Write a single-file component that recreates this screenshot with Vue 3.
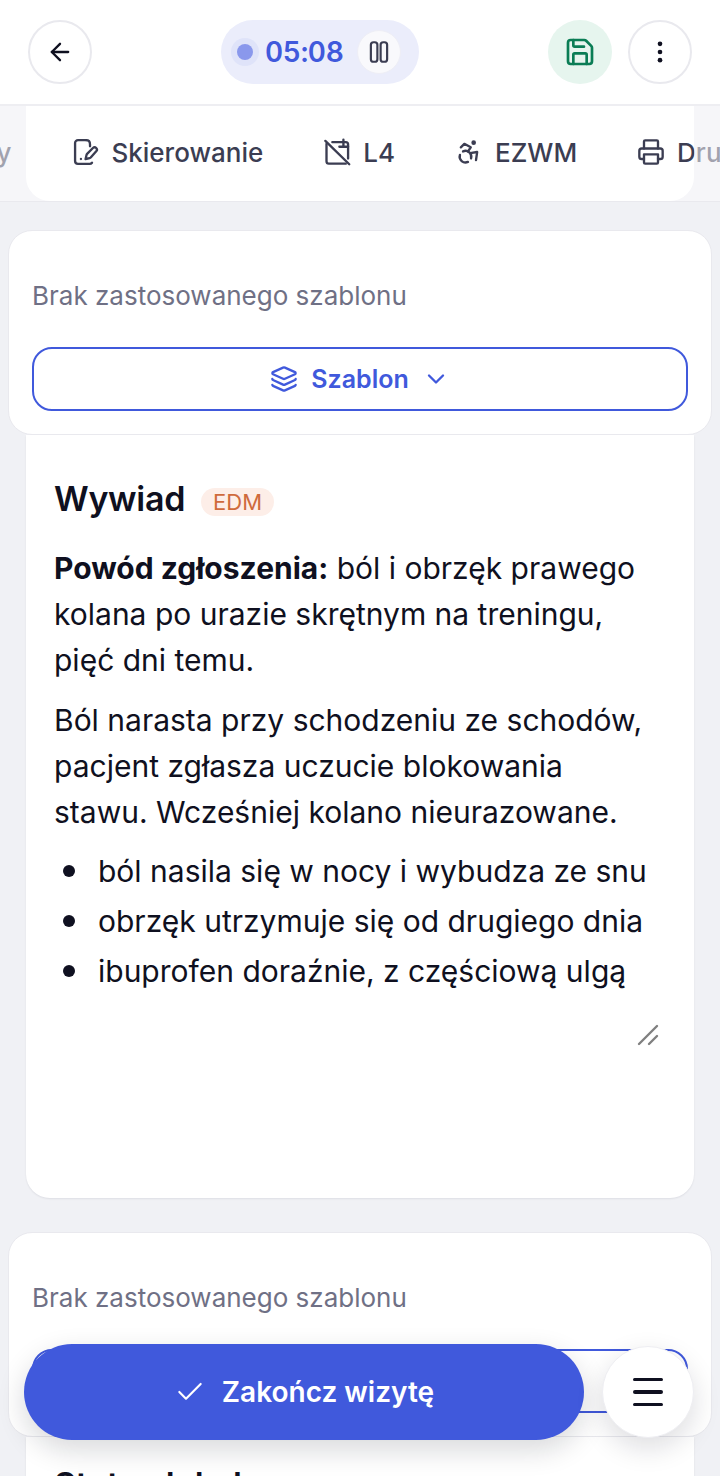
<template>
  <div class="screen">
    <header class="topbar">
      <button class="round">
        <svg width="28" height="28" viewBox="0 0 24 24" fill="none" stroke="#0f1020" stroke-width="2" stroke-linecap="round" stroke-linejoin="round">
          <path d="M19 12H5" /><path d="M12 19l-7-7 7-7" />
        </svg>
      </button>
      <div class="timer">
        <span class="dot"></span>
        <span class="time">05:08</span>
        <span class="pause">
          <svg width="26" height="26" viewBox="0 0 24 24" fill="none" stroke="#3b3d52" stroke-width="2" stroke-linejoin="round">
            <rect x="4.5" y="3" width="6" height="18" rx="2.4" /><rect x="13.5" y="3" width="6" height="18" rx="2.4" />
          </svg>
        </span>
      </div>
      <div class="top-right">
        <button class="round save">
          <svg width="32" height="32" viewBox="0 0 24 24" fill="none" stroke="#0a7d55" stroke-width="2" stroke-linecap="round" stroke-linejoin="round">
            <path d="M15.2 3a2 2 0 0 1 1.4.6l3.8 3.8a2 2 0 0 1 .6 1.4V19a2 2 0 0 1-2 2H5a2 2 0 0 1-2-2V5a2 2 0 0 1 2-2z" />
            <path d="M17 21v-7a1 1 0 0 0-1-1H8a1 1 0 0 0-1 1v7" /><path d="M7 3v4a1 1 0 0 0 1 1h7" />
          </svg>
        </button>
        <button class="round">
          <svg width="28" height="28" viewBox="0 0 24 24" fill="#0f1020">
            <circle cx="12" cy="5" r="2" /><circle cx="12" cy="12" r="2" /><circle cx="12" cy="19" r="2" />
          </svg>
        </button>
      </div>
    </header>

    <div class="tabs">
      <div class="tab-row">
        <div class="tab" v-for="tab in tabs" :key="tab.label">
          <svg width="28" height="28" viewBox="0 0 24 24" fill="none" stroke="#3b3d52" stroke-width="2" stroke-linecap="round" stroke-linejoin="round">
            <path v-for="(d, i) in tab.paths" :key="i" :d="d" />
            <circle v-if="tab.head" cx="16" cy="4" r="1" />
          </svg>
          <span>{{ tab.label }}</span>
        </div>
      </div>
      <div class="fade fade-left"></div>
      <div class="fade fade-right"></div>
    </div>

    <main class="content">
      <template v-for="(section, i) in sections" :key="i">
        <div class="template-card">
          <p class="no-template">Brak zastosowanego szablonu</p>
          <button class="template-btn">
            <svg width="28" height="28" viewBox="0 0 24 24" fill="none" stroke="#4059dc" stroke-width="2" stroke-linecap="round" stroke-linejoin="round">
              <path d="M12.8 2.2a2 2 0 0 0-1.6 0L2.6 6.1a1 1 0 0 0 0 1.8l8.6 3.9a2 2 0 0 0 1.6 0l8.6-3.9a1 1 0 0 0 0-1.8z" />
              <path d="M2 12a1 1 0 0 0 .6.9l8.6 3.9a2 2 0 0 0 1.6 0l8.6-3.9A1 1 0 0 0 22 12" />
              <path d="M2 17a1 1 0 0 0 .6.9l8.6 3.9a2 2 0 0 0 1.6 0l8.6-3.9A1 1 0 0 0 22 17" />
            </svg>
            <span>Szablon</span>
            <svg class="chev" width="28" height="28" viewBox="0 0 24 24" fill="none" stroke="#4059dc" stroke-width="2" stroke-linecap="round" stroke-linejoin="round">
              <path d="M6 9l6 6 6-6" />
            </svg>
          </button>
        </div>
        <section class="editor" :class="{ last: i === sections.length - 1 }">
          <div class="editor-head">
            <h2>{{ section.title }}</h2>
            <span v-if="section.edm" class="edm">EDM</span>
          </div>
          <template v-if="section.edm">
            <p><b>Powód zgłoszenia:</b> ból i obrzęk prawego kolana po urazie skrętnym na treningu, pięć dni temu.</p>
            <p>Ból narasta przy schodzeniu ze schodów, pacjent zgłasza uczucie blokowania stawu. Wcześniej kolano nieurazowane.</p>
            <ul>
              <li>ból nasila się w nocy i wybudza ze snu</li>
              <li>obrzęk utrzymuje się od drugiego dnia</li>
              <li>ibuprofen doraźnie, z częściową ulgą</li>
            </ul>
            <svg class="resize" width="24" height="24" viewBox="0 0 24 24" stroke="#808080" stroke-width="2.4" stroke-linecap="round">
              <path d="M3 21L21 3" /><path d="M13 21l8-8" />
            </svg>
          </template>
        </section>
      </template>
    </main>

    <div class="bottom-bar">
      <button class="finish">
        <svg width="32" height="32" viewBox="0 0 24 24" fill="none" stroke="#fff" stroke-width="1.6" stroke-linecap="round" stroke-linejoin="round">
          <path d="M20 6L9 17l-5-5" />
        </svg>
        <span>Zakończ wizytę</span>
      </button>
      <button class="menu">
        <span></span><span></span><span></span>
      </button>
    </div>
  </div>
</template>

<script setup>
const tabs = [
  { label: 'Recepty', paths: ['M6 3h12v18H6z', 'M9 8h6', 'M9 12h6'] },
  {
    label: 'Skierowanie',
    paths: [
      'M13 1.8H6a2.5 2.5 0 0 0-2.5 2.5v15.4A2.5 2.5 0 0 0 6 22.2h10a2.5 2.5 0 0 0 2-1',
      'M13 1.8c2 0 3.3 1.6 3.3 3.7V7',
      'M8.5 18h.01',
      'M21.6 11.4a1.9 1.9 0 0 0-2.8-2.8l-5 5a2 2 0 0 0-.5.9l-.8 3.5 3.5-.8a2 2 0 0 0 .9-.5z'
    ]
  },
  {
    label: 'L4',
    paths: [
      'M2 2.5l20.5 20',
      'M3 5v15a2 2 0 0 0 2 2h14.5',
      'M8 3.5h11.5a2 2 0 0 1 2 2v12',
      'M17.5 1.5v6',
      'M14 7.5h7.5'
    ]
  },
  {
    label: 'EZWM',
    head: true,
    paths: [
      'M18 19l1-7-6 1',
      'M5 8l3-3 5.5 3-2.36 3.5',
      'M4.24 14.5a5 5 0 0 0 6.88 6',
      'M13.76 17.5a5 5 0 0 0-6.88-6'
    ]
  },
  {
    label: 'Druki',
    paths: [
      'M6 18H4a2 2 0 0 1-2-2v-5a2 2 0 0 1 2-2h16a2 2 0 0 1 2 2v5a2 2 0 0 1-2 2h-2',
      'M6 9V3a1 1 0 0 1 1-1h10a1 1 0 0 1 1 1v6',
      'M6 14h12v7a1 1 0 0 1-1 1H7a1 1 0 0 1-1-1z'
    ]
  }
]

const sections = [
  { title: 'Wywiad', edm: true },
  { title: 'Status lokalny', edm: false }
]
</script>

<style>
html, body {
  margin: 0;
  background: #f0f1f5;
}
</style>

<style scoped>
.screen {
  position: relative;
  width: 720px;
  height: 1476px;
  overflow: hidden;
  background: #f0f1f5;
  font-family: Inter, "Noto Sans", sans-serif;
  color: #0f1020;
}

button {
  font-family: inherit;
  padding: 0;
  cursor: pointer;
}

.topbar {
  height: 104px;
  box-sizing: border-box;
  padding: 20px 28px;
  background: #fff;
  display: flex;
  justify-content: space-between;
  align-items: center;
}

.round {
  width: 64px;
  height: 64px;
  border-radius: 50%;
  background: #fff;
  border: 2px solid #e9e9ee;
  display: flex;
  align-items: center;
  justify-content: center;
}

.round.save {
  background: #e6f5ee;
  border: none;
}

.top-right {
  display: flex;
  gap: 16px;
}

.timer {
  height: 64px;
  width: 198px;
  box-sizing: border-box;
  border-radius: 32px;
  background: #ebedfb;
  padding: 0 18px 0 16px;
  display: flex;
  align-items: center;
}

.dot {
  flex-shrink: 0;
  width: 16px;
  height: 16px;
  border-radius: 50%;
  background: #8a98ec;
  box-shadow: 0 0 0 6px #dfe3f9;
}

.time {
  margin-left: 12px;
  font-size: 28px;
  font-weight: 600;
  letter-spacing: -0.3px;
  color: #4059dc;
  font-variant-numeric: tabular-nums;
}

.pause {
  margin-left: auto;
  width: 44px;
  height: 44px;
  box-sizing: border-box;
  border-radius: 50%;
  background: #f9f9fc;
  border: 1px solid #eeeef6;
  display: flex;
  align-items: center;
  justify-content: center;
}

.tabs {
  position: relative;
  height: 98px;
  box-sizing: border-box;
  overflow: hidden;
  border-top: 2px solid #eeeef2;
  border-bottom: 1px solid #e9e9ee;
  background: #f6f6f9;
}

.tabs::before {
  content: "";
  position: absolute;
  inset: 0 26px;
  background: #fff;
  border-radius: 0 0 24px 24px;
}

.tab-row {
  position: relative;
  display: flex;
  gap: 60px;
  align-items: center;
  height: 92px;
  margin-left: -131px;
}

.tab {
  display: flex;
  align-items: center;
  gap: 12px;
  font-size: 26px;
  font-weight: 500;
  color: #3b3d52;
  white-space: nowrap;
  flex-shrink: 0;
}

.fade {
  position: absolute;
  top: 0;
  bottom: 0;
  width: 26px;
  background: rgba(246, 246, 249, 0.55);
}

.fade-left {
  left: 0;
}

.fade-right {
  right: 0;
}

.content {
  padding: 28px 8px 0;
}

.template-card {
  position: relative;
  z-index: 1;
  height: 205px;
  box-sizing: border-box;
  background: #fff;
  border-radius: 24px;
  border: 1px solid #e9e9ee;
  padding: 49px 23px 0;
}

.no-template {
  margin: 0;
  font-size: 26px;
  line-height: 32px;
  color: #6f7085;
}

.template-btn {
  margin-top: 35px;
  width: 100%;
  height: 64px;
  border: 2px solid #4059dc;
  border-radius: 20px;
  background: #fff;
  color: #4059dc;
  font-size: 25px;
  font-weight: 600;
  display: flex;
  align-items: center;
  justify-content: center;
  gap: 13px;
}

.editor {
  position: relative;
  margin: 0 18px 34px;
  height: 763px;
  box-sizing: border-box;
  background: #fff;
  border-radius: 0 0 24px 24px;
  box-shadow: 0 1px 2px rgba(15, 16, 32, 0.08);
  padding: 46px 40px 0 28px;
  font-size: 30px;
  line-height: 46px;
}

.editor.last {
  margin-bottom: 0;
  border-radius: 0;
  padding-top: 30px;
}

.editor-head {
  display: flex;
  align-items: center;
  gap: 16px;
  margin-bottom: 28px;
  height: 36px;
}

.editor-head h2 {
  margin: 0;
  font-size: 34px;
  font-weight: 600;
  letter-spacing: -0.3px;
  white-space: nowrap;
}

.edm {
  margin-top: 6px;
  padding: 0 12px;
  height: 28px;
  line-height: 28px;
  border-radius: 14px;
  background: #fdeee8;
  color: #cf6a3c;
  font-size: 22px;
}

.editor p {
  margin: 0 0 14px;
}

.editor b {
  font-weight: 700;
}

.editor ul {
  margin: -3px 0 0;
  padding: 0;
  list-style: none;
}

.editor li {
  display: flex;
  align-items: center;
  line-height: 50px;
  white-space: nowrap;
}

.editor li::before {
  content: "";
  flex-shrink: 0;
  width: 12px;
  height: 12px;
  border-radius: 50%;
  background: #0f1020;
  margin: 0 23px 0 9px;
}

.resize {
  position: absolute;
  right: 34px;
  top: 588px;
}

.bottom-bar {
  position: absolute;
  z-index: 5;
  left: 24px;
  right: 26px;
  top: 1344px;
  display: flex;
  align-items: center;
  gap: 18px;
}

.finish {
  width: 560px;
  height: 96px;
  border: none;
  border-radius: 48px;
  background: #4059dc;
  color: #fff;
  font-size: 28px;
  font-weight: 600;
  display: flex;
  align-items: center;
  justify-content: center;
  gap: 16px;
  box-shadow: 0 10px 28px rgba(15, 16, 32, 0.16);
}

.menu {
  width: 92px;
  height: 92px;
  border-radius: 50%;
  border: 1px solid #eeeef2;
  background: #fff;
  display: flex;
  flex-direction: column;
  align-items: center;
  justify-content: center;
  gap: 9px;
  box-shadow: 0 10px 28px rgba(15, 16, 32, 0.14);
}

.menu span {
  width: 30px;
  height: 3.5px;
  border-radius: 2px;
  background: #0f1020;
}
</style>
